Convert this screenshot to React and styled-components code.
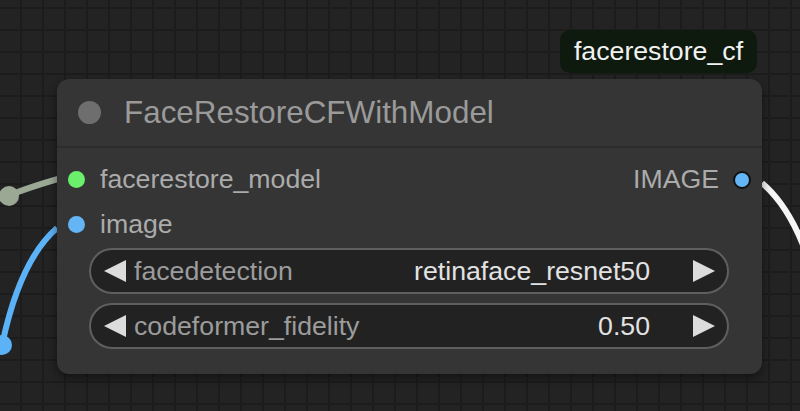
import React from "react";
import styled, { createGlobalStyle } from "styled-components";

const Global = createGlobalStyle`
  html, body { margin: 0; padding: 0; }
  body { width: 800px; height: 411px; overflow: hidden; background: #222; font-family: "Liberation Sans", Arial, sans-serif; }
`;

const Canvas = styled.div`
  position: relative;
  width: 800px;
  height: 411px;
  overflow: hidden;
  background-color: #232323;
  background-image:
    linear-gradient(to right, #1c1c1c 2px, transparent 2px),
    linear-gradient(to bottom, #1c1c1c 2px, transparent 2px);
  background-size: 22px 22px;
  background-position: 20px 7px;
`;

const Links = styled.svg`
  position: absolute;
  left: 0;
  top: 0;
  width: 800px;
  height: 411px;
`;

const Tag = styled.div`
  position: absolute;
  left: 560px;
  top: 30px;
  width: 197px;
  height: 43px;
  display: flex;
  align-items: center;
  justify-content: center;
  background: #0e1a0e;
  border-radius: 10px;
  color: #f2f2f2;
  font-size: 26.7px;
`;

const Node = styled.div`
  position: absolute;
  left: 57px;
  top: 79px;
  width: 705px;
  height: 295px;
  background: #353535;
  border-radius: 12px;
  box-shadow: 0 4px 10px rgba(0, 0, 0, 0.45);
  display: flex;
  flex-direction: column;
`;

const Title = styled.div`
  height: 67px;
  display: flex;
  align-items: center;
  gap: 23px;
  padding-left: 21px;
  border-bottom: 2px solid #2c2c2c;
  color: #9a9a9a;
  font-size: 31.4px;
`;

const Dot = styled.span`
  width: 23px;
  height: 23px;
  border-radius: 50%;
  background: #6e6e6e;
  flex: none;
`;

const Body = styled.div`
  display: flex;
  flex-direction: column;
  padding: 9px 33px 0 11px;
`;

const SlotRow = styled.div`
  height: 45px;
  display: flex;
  align-items: center;
  justify-content: space-between;
  color: #ababab;
  font-size: 26.7px;
`;

const Slot = styled.div`
  display: flex;
  align-items: center;
  gap: ${(p) => (p.$right ? "14px" : "15px")};
  flex-direction: ${(p) => (p.$right ? "row-reverse" : "row")};
  margin-right: ${(p) => (p.$right ? "-22px" : "0")};
`;

const Socket = styled.span`
  width: ${(p) => (p.$outlined ? "14px" : "17px")};
  height: ${(p) => (p.$outlined ? "14px" : "17px")};
  border-radius: 50%;
  background: ${(p) => p.$color};
  border: ${(p) => (p.$outlined ? "2px solid #111" : "none")};
  flex: none;
`;

const Widgets = styled.div`
  display: flex;
  flex-direction: column;
  gap: 9px;
  padding: 1px 0 0 21px;
`;

const Widget = styled.div`
  height: 42px;
  border: 2px solid #5f5f5f;
  border-radius: 23px;
  background: #222;
  display: flex;
  align-items: center;
  padding: 0 12px 0 13px;
  font-size: 26.7px;
`;

const Arrow = styled.span`
  width: 0;
  height: 0;
  border-top: 11px solid transparent;
  border-bottom: 11px solid transparent;
  ${(p) =>
    p.$dir === "left"
      ? "border-right: 22px solid #dcdcdc;"
      : "border-left: 22px solid #dcdcdc;"}
  flex: none;
`;

const Label = styled.span`
  color: #9c9c9c;
  margin-left: 8px;
  flex: 1;
`;

const Value = styled.span`
  color: #e2e2e2;
  margin-right: 43px;
`;

export default function App() {
  return (
    <Canvas>
      <Global />
      <Links viewBox="0 0 800 411">
        <path d="M -20 205 L 10 195 Q 30 187 58 179" stroke="#9aa894" strokeWidth="6" fill="none" strokeLinecap="round" />
        <circle cx="9" cy="196" r="10" fill="#9aa894" />
        <path d="M 2 345 Q 20 260 57 228" stroke="#5cb2f6" strokeWidth="6" fill="none" />
        <circle cx="2" cy="345" r="10" fill="#5cb2f6" />
        <path d="M 762 183 Q 788 205 805 250" stroke="#f5f5f5" strokeWidth="6" fill="none" />
      </Links>
      <Tag>facerestore_cf</Tag>
      <Node>
        <Title>
          <Dot />
          FaceRestoreCFWithModel
        </Title>
        <Body>
          <SlotRow>
            <Slot>
              <Socket $color="#6bf06b" />
              facerestore_model
            </Slot>
            <Slot $right>
              <Socket $color="#64b5f6" $outlined />
              IMAGE
            </Slot>
          </SlotRow>
          <SlotRow>
            <Slot>
              <Socket $color="#64b5f6" />
              image
            </Slot>
          </SlotRow>
          <Widgets>
            <Widget>
              <Arrow $dir="left" />
              <Label>facedetection</Label>
              <Value>retinaface_resnet50</Value>
              <Arrow $dir="right" />
            </Widget>
            <Widget>
              <Arrow $dir="left" />
              <Label>codeformer_fidelity</Label>
              <Value>0.50</Value>
              <Arrow $dir="right" />
            </Widget>
          </Widgets>
        </Body>
      </Node>
    </Canvas>
  );
}
